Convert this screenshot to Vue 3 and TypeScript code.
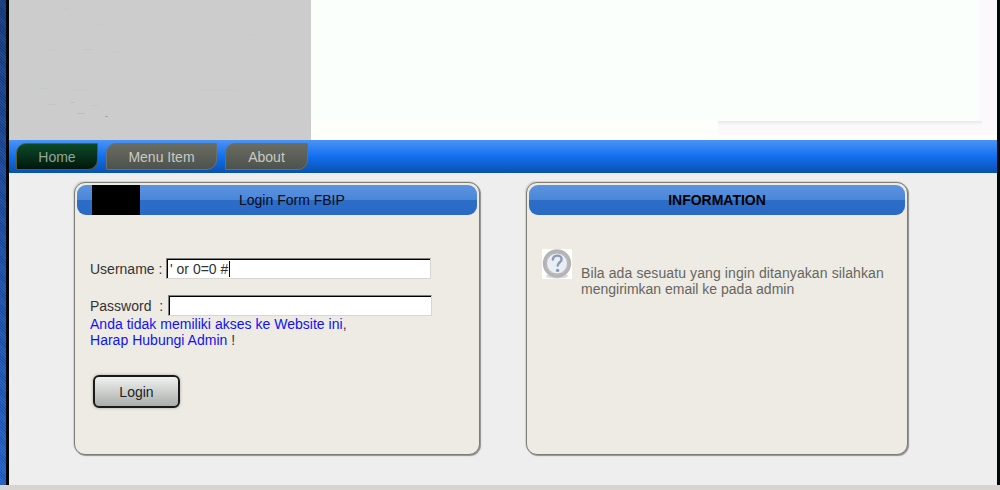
<template>
  <div class="shell">
    <div class="page">
      <div class="banner">
        <div class="banner-left">
          <svg class="specks" viewBox="0 0 302 140" width="302" height="140" aria-hidden="true">
            <rect
              v-for="(s, i) in specks"
              :key="i"
              :x="s[0]"
              :y="s[1]"
              :width="s[2]"
              height="1"
              :fill="s[3]"
            />
          </svg>
        </div>
        <div class="banner-right">
          <span class="banner-edge"></span>
          <span class="banner-fade"></span>
        </div>
      </div>

      <nav class="menu">
        <a
          v-for="item in menuItems"
          :key="item.label"
          class="tab"
          :class="{ active: item.active }"
          :style="{ width: item.width + 'px' }"
        >
          {{ item.label }}
        </a>
      </nav>

      <main class="content">
        <section class="panel login">
          <header class="panel-head">
            <span class="head-logo"></span>
            <span class="head-title">Login Form FBIP</span>
          </header>
          <form class="login-form" @submit.prevent>
            <div class="row user-row">
              <label for="username">Username :</label>
              <div class="field">
                <input id="username" v-model="username" type="text" />
                <span class="caret"></span>
              </div>
            </div>
            <div class="row pass-row">
              <label for="password">Password &nbsp;:</label>
              <div class="field">
                <input id="password" v-model="password" type="password" />
              </div>
            </div>
            <p class="notice">
              <span>Anda tidak memiliki akses ke Website ini</span><span class="comma">,</span><br />
              Harap Hubungi Admin <span class="comma">!</span>
            </p>
            <button class="login-btn" type="submit">Login</button>
          </form>
        </section>

        <section class="panel info">
          <header class="panel-head center">INFORMATION</header>
          <div class="info-body">
            <svg class="help-icon" viewBox="0 0 30 30" width="30" height="30" aria-hidden="true">
              <rect width="30" height="30" fill="#fff" />
              <ellipse cx="15" cy="27" rx="11" ry="2.5" fill="#d8d8d8" />
              <circle cx="15" cy="14.5" r="12.5" fill="#e9eef5" stroke="#b4b4b4" stroke-width="3.4" />
              <circle cx="15" cy="14.5" r="10.5" fill="none" stroke="#9a9a9a" stroke-width="0.7" />
              <path
                d="M10.8 10.5c.4-2.6 2.3-3.9 4.5-3.9 2.5 0 4.3 1.5 4.3 3.6 0 2.9-3.8 3.2-3.9 6.4"
                fill="none"
                stroke="#8a9ab5"
                stroke-width="2.4"
                stroke-linecap="round"
              />
              <circle cx="15.6" cy="21.4" r="1.7" fill="#8a9ab5" />
            </svg>
            <p class="info-text">
              Bila ada sesuatu yang ingin ditanyakan silahkan mengirimkan email ke pada admin
            </p>
          </div>
        </section>
      </main>
    </div>
  </div>
</template>

<script setup lang="ts">
import { ref } from 'vue'

const menuItems = [
  { label: 'Home', width: 82, active: true },
  { label: 'Menu Item', width: 111, active: false },
  { label: 'About', width: 83, active: false },
]

// faint marks left over in the banner image
const specks: [number, number, number, string][] = [
  [55, 8, 4, '#c8c8c8'],
  [52, 21, 3, '#c8c8c8'],
  [88, 24, 5, '#c9c9c9'],
  [240, 34, 3, '#c6c6c6'],
  [38, 50, 12, '#c8c8c8'],
  [75, 49, 8, '#c4c4c4'],
  [100, 51, 14, '#c9c9c9'],
  [30, 88, 10, '#c0cacc'],
  [60, 90, 22, '#c9c9c9'],
  [190, 90, 40, '#c9c9c9'],
  [38, 104, 8, '#c4c4c4'],
  [62, 102, 3, '#bcbcbc'],
  [84, 105, 4, '#c2c2c2'],
  [68, 113, 8, '#bebebe'],
  [96, 116, 3, '#a8a8a8'],
]

const username = ref("' or 0=0 #")
const password = ref('')
</script>

<style scoped>
.shell {
  height: 485px;
  padding-left: 6px;
  background:
    repeating-linear-gradient(45deg, rgba(255, 255, 255, 0.06) 0 1px, rgba(0, 0, 0, 0.08) 1px 2px),
    linear-gradient(#153a80, #2060c8);
}

.page {
  width: 988px;
  height: 485px;
  border-left: 3px solid #000;
  border-right: 3px solid #020a08;
  background: #eeeeee;
  font-family: 'Liberation Sans', Arial, sans-serif;
  font-size: 14px;
  overflow: hidden;
}

.banner {
  display: flex;
  height: 140px;
}

.banner-left {
  width: 302px;
  background: #cccccc;
}

.specks {
  display: block;
}

.banner-right {
  flex: 1;
  position: relative;
  background: linear-gradient(#fbfffb 121px, #fefefb 121px);
}

.banner-edge {
  position: absolute;
  top: 0;
  right: 0;
  width: 19px;
  height: 135px;
  background: #fbf9fb;
}

.banner-fade {
  position: absolute;
  left: 407px;
  right: 15px;
  top: 121px;
  height: 14px;
  background: linear-gradient(#e9e9e9 0, #f6f5f6 3px, #fbf9fb 5px);
}

.menu {
  display: flex;
  gap: 8px;
  height: 33px;
  box-sizing: border-box;
  padding: 3px 0 0 7px;
  background: linear-gradient(#4b94f6 0%, #1170ee 50%, #0a50ae 100%);
}

.tab {
  box-sizing: border-box;
  height: 27px;
  line-height: 26px;
  text-align: center;
  color: #c8cbc3;
  border: 1px solid #6b6f68;
  border-radius: 10px 0 10px 0;
  background: linear-gradient(#686c62, #4e524d);
}

.tab.active {
  color: #8fa595;
  border-color: #5d5a2c;
  background: linear-gradient(#0b4a28, #02170e);
}

.content {
  display: flex;
  gap: 46px;
  padding: 9px 0 0 65px;
  box-sizing: border-box;
}

.panel {
  box-sizing: border-box;
  height: 273px;
  padding: 2px;
  background: #edebe4;
  border: 1px solid #7d7d78;
  border-radius: 11px;
  box-shadow: 1px 1px 1px #8f8f8f, -1px -1px 1px #d2d2ce;
}

.login {
  width: 406px;
}

.info {
  width: 382px;
}

.panel-head {
  display: flex;
  align-items: center;
  height: 30px;
  padding-left: 15px;
  color: #0a0a14;
  border-radius: 9px;
  background: linear-gradient(#5b93e0 0%, #4c87d8 49%, #2c6dc8 50%, #2a6ac6 100%);
}

.panel-head.center {
  justify-content: center;
  padding-left: 0;
  color: #000;
  font-weight: bold;
}

.head-logo {
  width: 48px;
  height: 30px;
  background: #000;
}

.head-title {
  margin-left: 99px;
}

.login-form {
  padding: 43px 0 0 13px;
  color: #333;
}

.row {
  display: flex;
  align-items: center;
}

.row label {
  flex: none;
}

.user-row label {
  width: 76px;
}

.user-row input {
  width: 265px;
}

.pass-row {
  margin-top: 16px;
}

.pass-row label {
  width: 78px;
}

.pass-row input {
  width: 264px;
}

.field {
  position: relative;
}

.field input {
  display: block;
  box-sizing: border-box;
  height: 21px;
  padding: 0 0 0 3px;
  background: #fff;
  color: #333;
  font: inherit;
  border: 1px solid;
  border-color: #808080 #d8d6d0 #d8d6d0 #808080;
  box-shadow: inset 1px 1px 0 #000;
  outline: none;
}

.caret {
  position: absolute;
  left: 63px;
  top: 3px;
  width: 1px;
  height: 16px;
  background: #000;
}

.notice {
  margin: 0;
  line-height: 16px;
  color: #1212f0;
  letter-spacing: 0.02px;
}

.comma {
  color: #333;
}

.login-btn {
  display: block;
  box-sizing: border-box;
  width: 87px;
  height: 33px;
  margin: 27px 0 0 3px;
  padding: 0;
  color: #222;
  font: inherit;
  border: 2px solid #1a1a1a;
  border-radius: 6px;
  background: linear-gradient(#f0f1f0, #a9aeaa);
  box-shadow: 0 0 3px #a0a09a;
}

.info-body {
  display: flex;
  align-items: flex-start;
  padding: 34px 20px 0 13px;
}

.help-icon {
  flex: none;
}

.info-text {
  margin: 16px 0 0 9px;
  line-height: 16px;
  color: #66665f;
}

.info-text::first-line {
  letter-spacing: 0.1px;
}
</style>

<style>
html,
body {
  margin: 0;
  height: 100%;
  overflow: hidden;
  background: #d8d5d0;
}
</style>
